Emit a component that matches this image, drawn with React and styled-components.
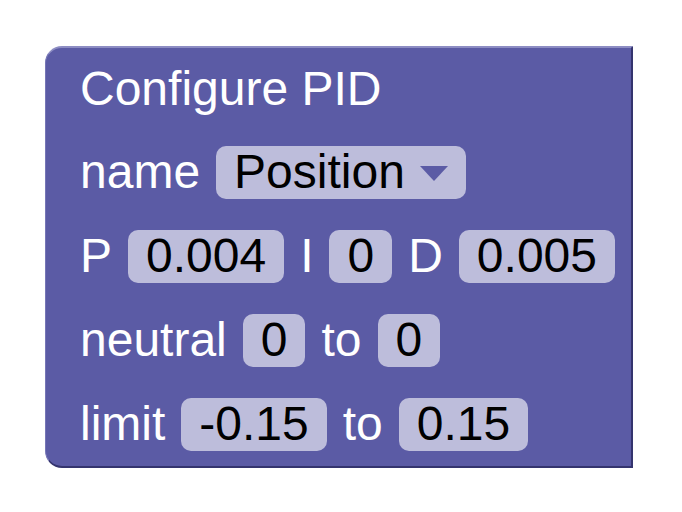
import React from "react";
import styled, { createGlobalStyle } from "styled-components";

const Global = createGlobalStyle`
  html, body { margin: 0; padding: 0; background: #ffffff; }
  body { font-family: "Liberation Sans", Arial, sans-serif; }
`;

const Page = styled.div`
  width: 682px;
  height: 512px;
  padding: 46px 0 0 45px;
  box-sizing: border-box;
`;

const Block = styled.div`
  width: 588px;
  box-sizing: border-box;
  background: #5b5ba5;
  border-top: 2px solid #8d8dc3;
  border-left: 1px solid #7676b6;
  border-right: 2px solid #34346e;
  border-bottom: 2px solid #34346e;
  border-radius: 17px 0 0 17px;
  padding: 0 0 0 34px;
  display: flex;
  flex-direction: column;
  color: #ffffff;
  font-family: "Liberation Sans", Arial, sans-serif;
  font-size: 48px;
`;

const Row = styled.div`
  height: ${(p) => (p.$first ? 82 : 84)}px;
  display: flex;
  align-items: center;
  gap: 16px;
  white-space: nowrap;
`;

const Label = styled.span`
  line-height: 1;
  color: #ffffff;
`;

const Field = styled.span`
  display: inline-flex;
  align-items: center;
  gap: 15px;
  height: 53px;
  padding: 0 18px;
  border-radius: 10px;
  background: #bdbddb;
  color: #000000;
  line-height: 1;
`;

const Arrow = styled.svg`
  display: block;
  width: 28px;
  height: 15px;
  margin-top: 2px;
`;

const DropArrow = () => (
  <Arrow viewBox="0 0 28 15">
    <polygon points="0,0 28,0 14,15" fill="#5b5ba5" />
  </Arrow>
);

export default function App() {
  return (
    <>
      <Global />
      <Page>
        <Block>
          <Row $first>
            <Label>Configure PID</Label>
          </Row>
          <Row>
            <Label>name</Label>
            <Field>
              Position
              <DropArrow />
            </Field>
          </Row>
          <Row>
            <Label>P</Label>
            <Field>0.004</Field>
            <Label>I</Label>
            <Field>0</Field>
            <Label>D</Label>
            <Field>0.005</Field>
          </Row>
          <Row>
            <Label>neutral</Label>
            <Field>0</Field>
            <Label>to</Label>
            <Field>0</Field>
          </Row>
          <Row>
            <Label>limit</Label>
            <Field>-0.15</Field>
            <Label>to</Label>
            <Field>0.15</Field>
          </Row>
        </Block>
      </Page>
    </>
  );
}
